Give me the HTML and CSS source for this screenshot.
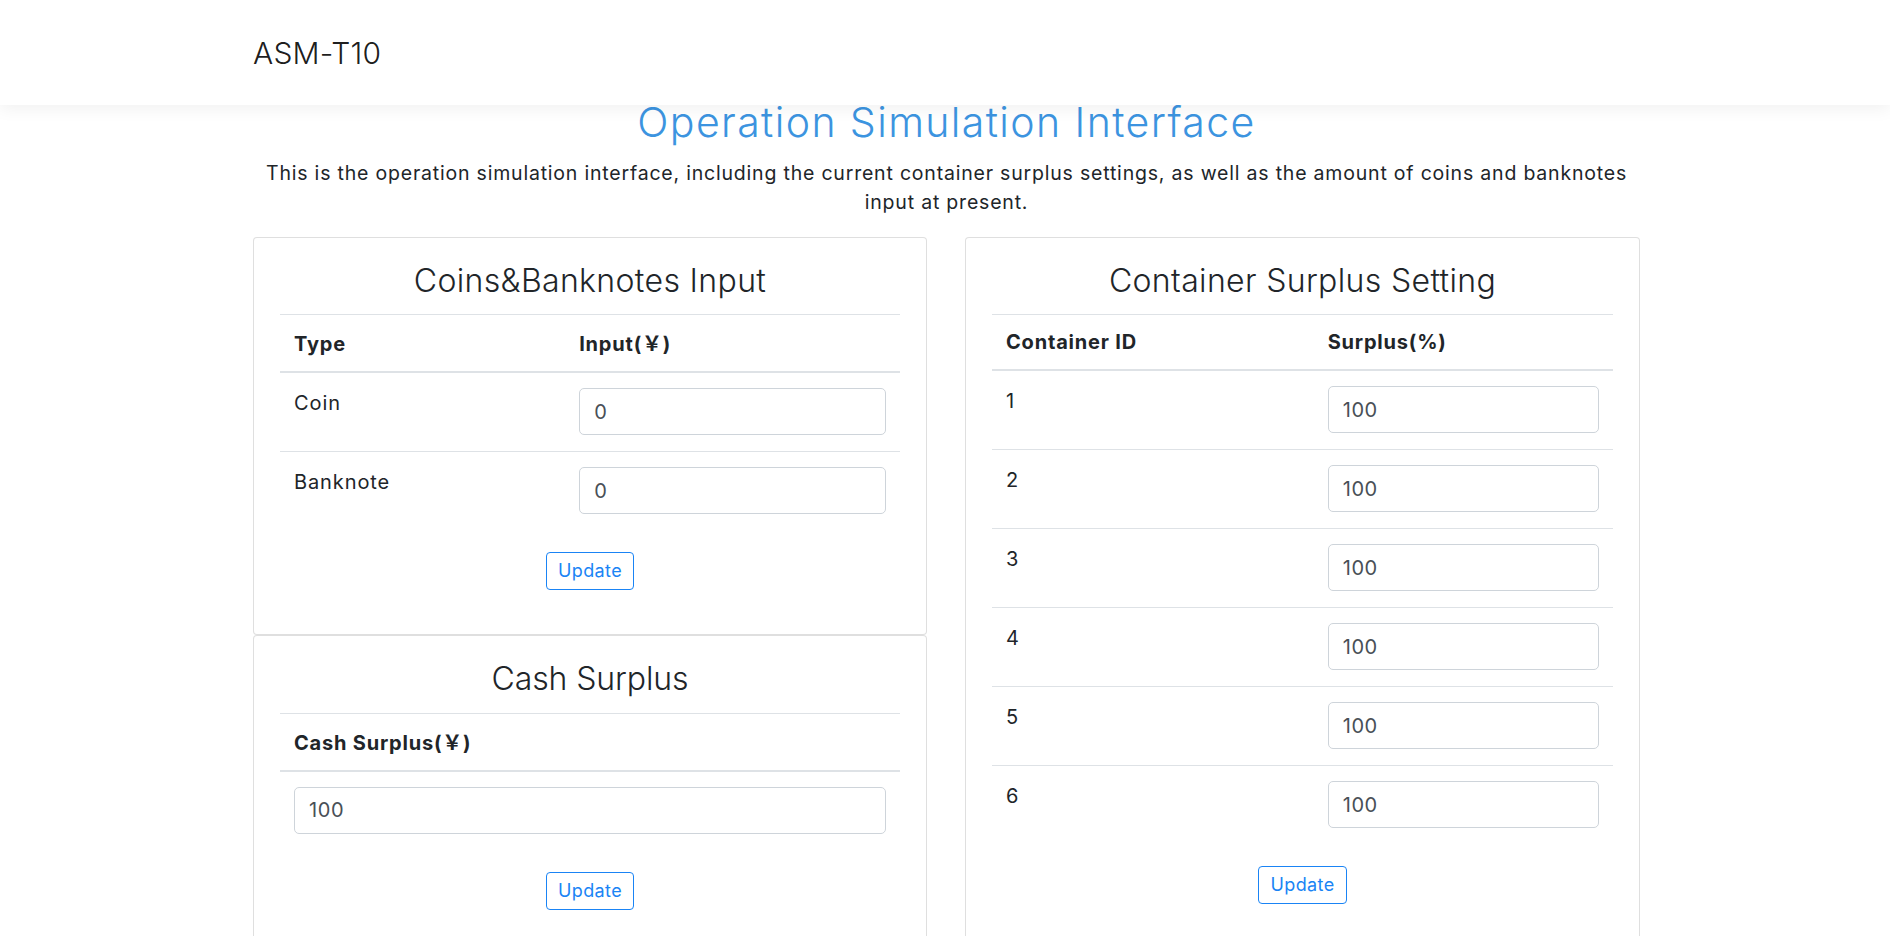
FILE: index.html
```html
<!DOCTYPE html>
<html lang="en">
<head>
<meta charset="utf-8">
<title>ASM-T10</title>
<link rel="stylesheet" href="styles.css">
</head>
<body>
<header class="topbar">
  <div class="wrap topbar-inner">
    <span class="brand">ASM-T10</span>
  </div>
</header>
<main class="wrap">
  <h1 class="page-title">Operation Simulation Interface</h1>
  <p class="page-desc">This is the operation simulation interface, including the current container surplus settings, as well as the amount of coins and banknotes input at present.</p>
  <div class="grid">
    <div class="col">
      <section class="card">
        <h2 class="card-title">Coins&amp;Banknotes Input</h2>
        <table class="tbl tbl-money">
          <thead>
            <tr><th class="w-type">Type</th><th>Input(￥)</th></tr>
          </thead>
          <tbody>
            <tr><td>Coin</td><td><input class="field" type="text" value="0"></td></tr>
            <tr><td>Banknote</td><td><input class="field" type="text" value="0"></td></tr>
          </tbody>
        </table>
        <div class="actions"><button class="btn" type="button">Update</button></div>
      </section>
      <section class="card">
        <h2 class="card-title card-title-2">Cash Surplus</h2>
        <table class="tbl tbl-money">
          <thead>
            <tr><th>Cash Surplus(￥)</th></tr>
          </thead>
          <tbody>
            <tr><td><input class="field" type="text" value="100"></td></tr>
          </tbody>
        </table>
        <div class="actions"><button class="btn" type="button">Update</button></div>
      </section>
    </div>
    <div class="col">
      <section class="card">
        <h2 class="card-title">Container Surplus Setting</h2>
        <table class="tbl">
          <thead>
            <tr><th class="w-id">Container ID</th><th>Surplus(%)</th></tr>
          </thead>
          <tbody>
            <tr><td>1</td><td><input class="field" type="text" value="100"></td></tr>
            <tr><td>2</td><td><input class="field" type="text" value="100"></td></tr>
            <tr><td>3</td><td><input class="field" type="text" value="100"></td></tr>
            <tr><td>4</td><td><input class="field" type="text" value="100"></td></tr>
            <tr><td>5</td><td><input class="field" type="text" value="100"></td></tr>
            <tr><td>6</td><td><input class="field" type="text" value="100"></td></tr>
          </tbody>
        </table>
        <div class="actions"><button class="btn" type="button">Update</button></div>
      </section>
    </div>
  </div>
</main>
</body>
</html>
```

FILE: styles.css
```css
* { box-sizing: border-box; }
html, body { margin: 0; padding: 0; }
body {
  font-family: Inter, "Noto Sans CJK SC", sans-serif;
  color: #212529;
  background: #fff;
}
.wrap {
  width: 1387px;
  margin-left: calc(50% - 692px);
}
.topbar {
  height: 105px;
  background: #fff;
  box-shadow: 0 4px 16px rgba(0, 0, 0, 0.06);
  position: relative;
}
.topbar-inner {
  height: 100%;
  display: flex;
  align-items: center;
}
.brand {
  font-size: 30px;
  font-weight: 300;
  line-height: 30px;
  letter-spacing: 0.2px;
  color: rgba(0, 0, 0, 0.9);
}
.page-title {
  margin: -3px 0 0;
  text-align: center;
  font-size: 41px;
  line-height: 40px;
  font-weight: 300;
  letter-spacing: 1.4px;
  color: #3c94e0;
}
.page-desc {
  margin: 17px 0 0;
  text-align: center;
  font-size: 19.5px;
  line-height: 29px;
  letter-spacing: 0.8px;
}
.grid {
  margin-top: 20px;
  display: grid;
  grid-template-columns: 674px 1fr;
  column-gap: 38px;
  align-items: start;
}
.card {
  border: 1px solid rgba(0, 0, 0, 0.125);
  border-radius: 4px;
  padding: 24px 26px 24px;
  background: #fff;
}
.card-title {
  margin: 0 0 14px;
  text-align: center;
  font-size: 32px;
  line-height: 38.4px;
  font-weight: 300;
  letter-spacing: 0.35px;
}
.card-title-2 {
  letter-spacing: -0.1px;
}
.tbl {
  width: 100%;
  border-collapse: collapse;
}
.tbl th {
  text-align: left;
  font-size: 20px;
  line-height: 30px;
  font-weight: 700;
  letter-spacing: 0.8px;
  padding: 12px 14px;
  border-top: 1px solid #dee2e6;
  border-bottom: 2px solid #dee2e6;
  vertical-align: bottom;
}
.tbl-money th { padding-top: 14px; }
.tbl th.w-type { width: 46%; }
.tbl th.w-id { width: 51.8%; }
.tbl td {
  font-size: 20px;
  line-height: 30px;
  letter-spacing: 0.9px;
  padding: 15px 14px 16px;
  border-top: 1px solid #dee2e6;
  vertical-align: top;
}
.tbl tbody tr:first-child td { border-top: 0; }
.field {
  display: block;
  width: 100%;
  height: 47px;
  padding: 0 14px;
  border: 1px solid #ced4da;
  border-radius: 5px;
  font-family: Inter, sans-serif;
  font-size: 20px;
  letter-spacing: 0.6px;
  color: #495057;
  background: #fff;
}
.actions {
  display: flex;
  justify-content: center;
  margin: 22px 0 20px;
}
.btn {
  font-family: Inter, sans-serif;
  font-size: 18px;
  line-height: 26px;
  letter-spacing: 0.4px;
  padding: 5px 11px;
  color: #1a84f5;
  background: #fff;
  border: 1px solid #1a84f5;
  border-radius: 4px;
}
```
